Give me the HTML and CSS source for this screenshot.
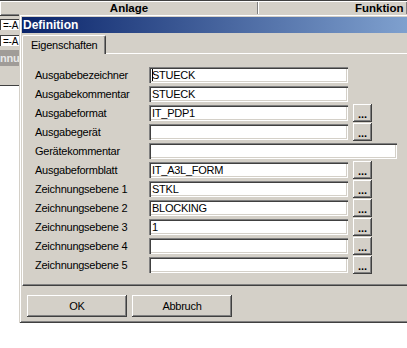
FILE: index.html
```html
<!DOCTYPE html>
<html>
<head>
<meta charset="utf-8">
<link rel="stylesheet" href="styles.css">
</head>
<body>
<div class="app">
  <div class="hdr">
    <div class="hcell c1">Anlage</div>
    <div class="hcell c2">Funktion</div>
  </div>
  <div class="list">
    <div class="lrow">=-A</div>
    <div class="lrow">=-A</div>
    <div class="lband">nnu</div>
    <div class="lgray"></div>
  </div>
</div>

<div class="dlg">
  <div class="title">Definition</div>
  <div class="tabs"><div class="tab">Eigenschaften</div></div>
  <div class="panel">
    <div class="row"><span class="lbl">Ausgabebezeichner</span><div class="field"><i class="caret"></i>STUECK</div></div>
    <div class="row"><span class="lbl">Ausgabekommentar</span><div class="field">STUECK</div></div>
    <div class="row"><span class="lbl">Ausgabeformat</span><div class="field">IT_PDP1</div><div class="dots">...</div></div>
    <div class="row"><span class="lbl">Ausgabegerät</span><div class="field"></div><div class="dots">...</div></div>
    <div class="row"><span class="lbl">Gerätekommentar</span><div class="field wide"></div></div>
    <div class="row"><span class="lbl">Ausgabeformblatt</span><div class="field">IT_A3L_FORM</div><div class="dots">...</div></div>
    <div class="row"><span class="lbl">Zeichnungsebene 1</span><div class="field">STKL</div><div class="dots">...</div></div>
    <div class="row"><span class="lbl">Zeichnungsebene 2</span><div class="field">BLOCKING</div><div class="dots">...</div></div>
    <div class="row"><span class="lbl">Zeichnungsebene 3</span><div class="field">1</div><div class="dots">...</div></div>
    <div class="row"><span class="lbl">Zeichnungsebene 4</span><div class="field"></div><div class="dots">...</div></div>
    <div class="row"><span class="lbl">Zeichnungsebene 5</span><div class="field"></div><div class="dots">...</div></div>
  </div>
  <div class="buttons">
    <div class="btn">OK</div>
    <div class="btn">Abbruch</div>
  </div>
</div>
</body>
</html>
```
FILE: styles.css
```css
* { box-sizing: border-box; }
html, body { margin: 0; padding: 0; }
body {
  width: 407px;
  height: 348px;
  overflow: hidden;
  position: relative;
  background: #fff;
  font-family: "Liberation Sans", Arial, sans-serif;
  font-size: 11px;
  letter-spacing: -0.25px;
  color: #000;
}

/* background application */
.hdr {
  display: flex;
  height: 16px;
  border-top: 1px solid #404040;
  border-bottom: 1px solid #404040;
  background: #d4d0c8;
}
.hcell {
  flex: none;
  height: 14px;
  line-height: 14px;
  text-align: center;
  font-weight: bold;
  font-size: 11.5px;
  letter-spacing: 0;
  box-shadow: inset 1px 1px #fff, inset -1px -1px #808080;
}
.c1 { width: 258px; }
.c2 { width: 149px; padding-left: 97px; text-align: left; }

.list {
  width: 40px;
  background: #d4d0c8;
  padding-top: 3px;
}
.lrow {
  height: 11px;
  line-height: 11px;
  margin-bottom: 5px;
  background: #fff;
  font-size: 10px;
  padding-left: 2px;
  border-left: 1px solid #404040;
  border-top: 1px solid #404040;
}
.lband {
  height: 16px;
  line-height: 16px;
  background: #a09c98;
  color: #e8e8e8;
  font-weight: bold;
  font-size: 11px;
  margin-top: -1px;
}
.lgray {
  height: 20px;
  background: #d4d0c8;
  border-bottom: 1px solid #404040;
}

/* dialog (window over the app, cut by the right edge of the frame) */
.dlg {
  position: absolute;
  left: 19px;
  top: 14px;
  width: 388px;
  height: 309px;
  background: #d4d0c8;
  padding: 3px 0 3px 3px;
  box-shadow: inset 1px 1px #d4d0c8, inset 0 -1px #404040, inset 2px 2px #fff, inset 0 -2px #808080;
}
.title {
  height: 16px;
  line-height: 16px;
  padding-left: 1px;
  color: #fff;
  font-weight: bold;
  font-size: 12px;
  letter-spacing: 0;
  background: linear-gradient(to right, #0a246a, #a6caf0) 0 0 / 514px 100% no-repeat;
}
.tabs {
  display: flex;
  margin-top: 2px;
  height: 18px;
  position: relative;
  z-index: 1;
}
.tab {
  width: 84px;
  height: 19px;
  padding-left: 8px;
  line-height: 18px;
  background: #d4d0c8;
  border-top: 1px solid #fff;
  border-left: 1px solid #fff;
  border-right: 1px solid #404040;
  box-shadow: inset -1px 0 #808080;
  border-radius: 2px 2px 0 0;
}
.panel {
  height: 233px;
  border-top: 1px solid #fff;
  border-left: 1px solid #fff;
  border-bottom: 1px solid #404040;
  box-shadow: inset 0 -1px #808080;
  padding: 12px 0 0 12px;
}
.row {
  display: flex;
  align-items: flex-start;
  height: 18px;
  margin-bottom: 1px;
}
.lbl {
  flex: none;
  width: 114px;
  line-height: 18px;
  white-space: nowrap;
}
.field {
  flex: none;
  width: 199px;
  height: 16px;
  margin-top: 1px;
  padding: 0 3px;
  line-height: 16px;
  background: #fff;
  white-space: nowrap;
  box-shadow: inset 1px 1px #808080, inset 2px 2px #404040, inset -1px -1px #fff, inset -2px -2px #d4d0c8;
}
.field.wide { width: 248px; }
.caret {
  display: inline-block;
  width: 1px;
  height: 12px;
  background: #000;
  vertical-align: -2px;
  margin-right: -1px;
}
.dots {
  flex: none;
  width: 19px;
  height: 18px;
  margin-left: 5px;
  text-align: center;
  font-weight: bold;
  font-size: 11px;
  letter-spacing: 0;
  line-height: 20px;
  box-shadow: inset -1px -1px #404040, inset 1px 1px #fff, inset -2px -2px #808080;
}
.buttons {
  display: flex;
  gap: 5px;
  margin-top: 9px;
  padding-left: 5px;
}
.btn {
  width: 100px;
  height: 22px;
  line-height: 22px;
  text-align: center;
  box-shadow: inset -1px -1px #404040, inset 1px 1px #fff, inset -2px -2px #808080;
}
```
